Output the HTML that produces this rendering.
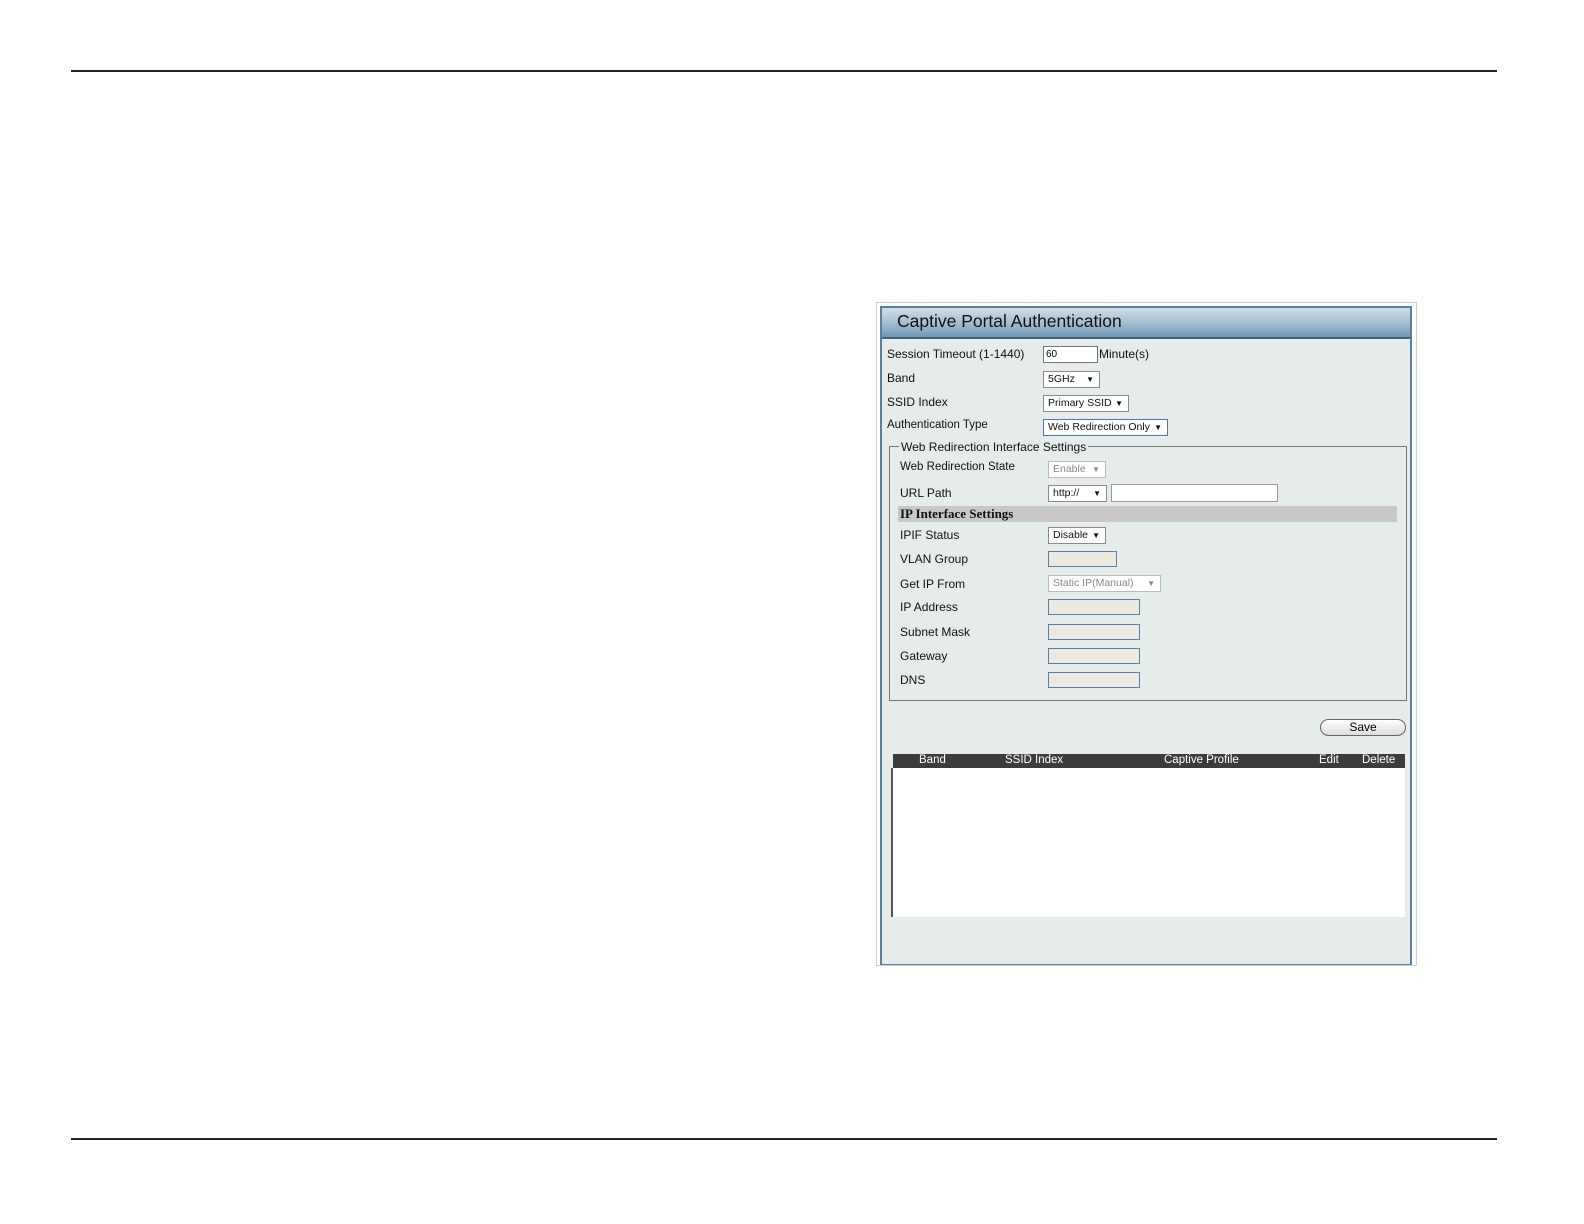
<!DOCTYPE html>
<html><head><style>
html,body{margin:0;padding:0}
body{width:1584px;height:1224px;background:#fff;position:relative;font-family:"Liberation Sans",sans-serif;overflow:hidden}
.a{position:absolute}
.hr{position:absolute;left:71px;width:1426px;height:2px;background:#222}
.l{position:absolute;font-size:12px;color:#111;white-space:nowrap}
.sel{position:absolute;border:1px solid #8a8a8a;background:#fff;font-size:10.5px;line-height:15px;padding-left:4px;box-sizing:border-box;height:17px;color:#111;white-space:nowrap}
.sel span{position:absolute;right:5px;top:0;font-size:8px}
.dis{color:#888;border-color:#bbb}
.inp{position:absolute;height:16px;border:1px solid #5a7fa8;background:#ece9e0;box-sizing:border-box}
</style></head><body>
<div class="hr" style="top:70px"></div>
<div class="hr" style="top:1138px"></div>
<div class="a" style="left:876px;top:302px;width:541px;height:664px;border:1px solid #c8d0d4;background:#fff;box-sizing:border-box"></div>
<div class="a" style="left:880px;top:306px;width:532px;height:659px;border:2px solid #5b7fa0;border-bottom-width:1px;background:#e5ecea;box-sizing:border-box"></div>
<div class="a" style="left:882px;top:308px;width:528px;height:29px;background:linear-gradient(#cfdde8,#a6bfd2 50%,#6f96b6);border-bottom:2px solid #3c6488"></div>
<div class="l" style="left:897px;top:311px;font-size:17.5px;color:#111">Captive Portal Authentication</div>

<div class="l" style="left:887px;top:347px">Session Timeout (1-1440)</div>
<div class="a" style="left:1043px;top:346px;width:55px;height:17px;border:1px solid #777;background:#fff;box-sizing:border-box;font-size:10px;padding:2px 0 0 2px">60</div>
<div class="l" style="left:1099px;top:347px">Minute(s)</div>
<div class="l" style="left:887px;top:371px">Band</div>
<div class="sel" style="left:1043px;top:371px;width:57px">5GHz<span>▼</span></div>
<div class="l" style="left:887px;top:395px">SSID Index</div>
<div class="sel" style="left:1043px;top:395px;width:86px">Primary SSID<span>▼</span></div>
<div class="l" style="left:887px;top:419px;font-size:11.5px">Authentication Type</div>
<div class="sel" style="left:1043px;top:419px;width:125px;border-color:#4a7ab0">Web Redirection Only<span>▼</span></div>

<div class="a" style="left:889px;top:446px;width:518px;height:255px;border:1px solid #777;box-sizing:border-box"></div>
<div class="l" style="left:899px;top:440px;background:#e5ecea;padding:0 2px">Web Redirection Interface Settings</div>
<div class="l" style="left:900px;top:461px;font-size:11.5px">Web Redirection State</div>
<div class="sel dis" style="left:1048px;top:461px;width:58px">Enable<span>▼</span></div>
<div class="l" style="left:900px;top:486px">URL Path</div>
<div class="sel" style="left:1048px;top:485px;width:59px">http://<span>▼</span></div>
<div class="a" style="left:1111px;top:484px;width:167px;height:18px;border:1px solid #999;background:#fff;box-sizing:border-box"></div>
<div class="a" style="left:898px;top:506px;width:499px;height:16px;background:#c8c8c8"></div>
<div class="l" style="left:900px;top:506px;font-weight:bold;font-family:'Liberation Serif',serif;font-size:13px">IP Interface Settings</div>
<div class="l" style="left:900px;top:528px">IPIF Status</div>
<div class="sel" style="left:1048px;top:527px;width:58px">Disable<span>▼</span></div>
<div class="l" style="left:900px;top:552px">VLAN Group</div>
<div class="inp" style="left:1048px;top:551px;width:69px"></div>
<div class="l" style="left:900px;top:577px">Get IP From</div>
<div class="sel dis" style="left:1048px;top:575px;width:113px">Static IP(Manual)<span>▼</span></div>
<div class="l" style="left:900px;top:600px">IP Address</div>
<div class="inp" style="left:1048px;top:599px;width:92px"></div>
<div class="l" style="left:900px;top:625px">Subnet Mask</div>
<div class="inp" style="left:1048px;top:624px;width:92px"></div>
<div class="l" style="left:900px;top:649px">Gateway</div>
<div class="inp" style="left:1048px;top:648px;width:92px"></div>
<div class="l" style="left:900px;top:673px">DNS</div>
<div class="inp" style="left:1048px;top:672px;width:92px"></div>

<div class="a" style="left:1320px;top:719px;width:86px;height:17px;border:1px solid #666;border-radius:9px;background:linear-gradient(#fff,#ddd);box-sizing:border-box;text-align:center;font-size:12px;line-height:15px">Save</div>

<div class="a" style="left:893px;top:754px;width:512px;height:14px;background:#3c3c3c"></div>
<div class="a" style="left:891px;top:768px;width:514px;height:149px;background:#fff;border-left:2px solid #555;box-sizing:border-box"></div>
<div class="l" style="left:919px;top:754px;color:#fff;font-size:11.5px">Band</div>
<div class="l" style="left:1005px;top:754px;color:#fff;font-size:11.5px">SSID Index</div>
<div class="l" style="left:1164px;top:754px;color:#fff;font-size:11.5px">Captive Profile</div>
<div class="l" style="left:1319px;top:754px;color:#fff;font-size:11.5px">Edit</div>
<div class="l" style="left:1362px;top:754px;color:#fff;font-size:11.5px">Delete</div>
</body></html>
